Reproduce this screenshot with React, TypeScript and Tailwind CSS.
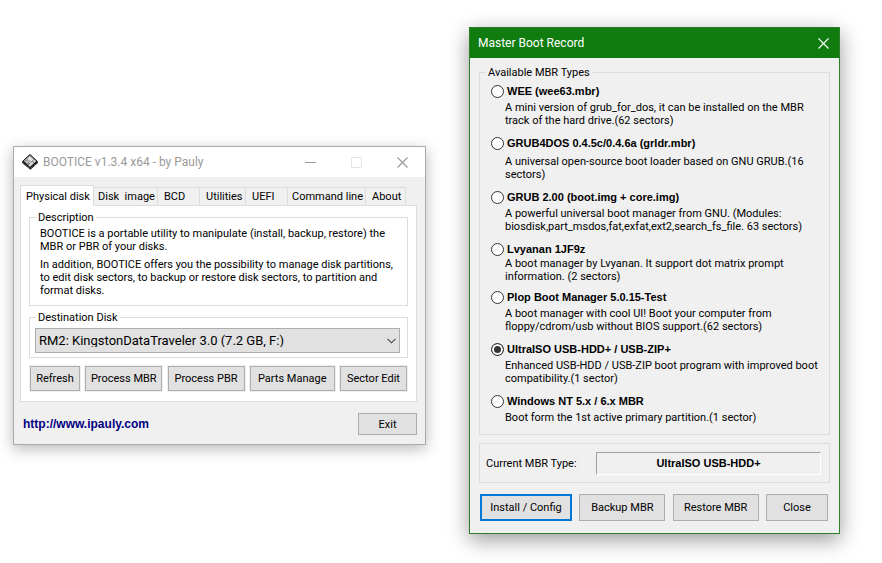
import type { ReactNode } from "react";
import clsx from "clsx";

type BootType = {
    id: string;
    title: string;
    lines: string[];
    descClass?: string;
    gapClass?: string;
};

const tabs = [
    { label: "Physical disk", width: "w-[74px]" },
    { label: "Disk  image", width: "w-[64px] pl-1" },
    { label: "BCD", width: "w-[42px] pl-1.5" },
    { label: "Utilities", width: "w-[46px] pl-1.5" },
    { label: "UEFI", width: "w-[42px] pl-1.5" },
    { label: "Command line", width: "w-[78px] pl-1" },
    { label: "About", width: "w-[40px] pl-1.5" },
];

const diskActions = [
    { label: "Refresh", width: "w-[50px]" },
    { label: "Process MBR", width: "w-[77px]" },
    { label: "Process PBR", width: "w-[77px]" },
    { label: "Parts Manage", width: "w-[85px]" },
    { label: "Sector Edit", width: "w-[67px]" },
];

const bootTypes: BootType[] = [
    {
        id: "wee",
        title: "WEE (wee63.mbr)",
        lines: [
            "A mini version of grub_for_dos, it can be installed on the MBR",
            "track of the hard drive.(62 sectors)",
        ],
        descClass: "mt-0.5",
        gapClass: "mb-2",
    },
    {
        id: "grub4dos",
        title: "GRUB4DOS 0.4.5c/0.4.6a (grldr.mbr)",
        lines: ["A universal open-source boot loader based on GNU GRUB.(16", "sectors)"],
        descClass: "mt-1",
        gapClass: "mb-2",
    },
    {
        id: "grub2",
        title: "GRUB 2.00 (boot.img + core.img)",
        lines: [
            "A powerful universal boot manager from GNU. (Modules:",
            "biosdisk,part_msdos,fat,exfat,ext2,search_fs_file. 63 sectors)",
        ],
        descClass: "mt-0.5",
        gapClass: "mb-2",
    },
    {
        id: "lvyanan",
        title: "Lvyanan 1JF9z",
        lines: ["A boot manager by Lvyanan. It support dot matrix prompt", "information. (2 sectors)"],
        gapClass: "mb-1.5",
    },
    {
        id: "plop",
        title: "Plop Boot Manager 5.0.15-Test",
        lines: [
            "A boot manager with cool UI! Boot your computer from",
            "floppy/cdrom/usb without BIOS support.(62 sectors)",
        ],
        descClass: "mt-0.5",
        gapClass: "mb-2",
    },
    {
        id: "ultraiso",
        title: "UltraISO USB-HDD+ / USB-ZIP+",
        lines: ["Enhanced USB-HDD / USB-ZIP boot program with improved boot", "compatibility.(1 sector)"],
        descClass: "mt-0.5",
        gapClass: "mb-2",
    },
    {
        id: "nt",
        title: "Windows NT 5.x / 6.x MBR",
        lines: ["Boot form the 1st active primary partition.(1 sector)"],
        descClass: "mt-0.5",
    },
];

const PushButton = ({ className, children }: { className?: string; children: ReactNode }) => (
    <button
        type="button"
        className={clsx(
            "flex items-center justify-center whitespace-nowrap bg-[#e1e1e1] hover:bg-[#e5f1fb]",
            className
        )}
    >
        {children}
    </button>
);

type GroupProps = {
    title: string;
    className?: string;
    bodyClass: string;
    children: ReactNode;
};

const Group = ({ title, className, bodyClass, children }: GroupProps) => (
    <fieldset className={clsx("min-w-0 border border-[#dcdcdc]", className)}>
        <legend className="ml-1.5 px-0.5 leading-[13px]">{title}</legend>
        <div className={bodyClass}>{children}</div>
    </fieldset>
);

const DiskIcon = () => (
    <svg width="16" height="16" viewBox="0 0 16 16" aria-hidden="true">
        <path d="M8 .2 15.8 7.6V9L8.4 15.8 .2 9V7.4Z" fill="#111" />
        <path d="M8 .6 14.8 7.2 8 13.4 .9 7.2Z" fill="#d8d8d8" stroke="#000" strokeWidth=".9" />
        <path d="M8 1.8 11.9 5.5 8.8 8.2 4.6 4.9Z" fill="#fff" stroke="#333" strokeWidth=".6" />
        <path d="M6.6 4.9 9 7M8 3.8 10.3 5.9" stroke="#888" strokeWidth=".6" />
        <path d="M3.8 6.2 7.6 9.8 6 11.2 2.2 7.6Z" fill="#999" stroke="#222" strokeWidth=".5" />
        <path d="M3.8 7.2 5.4 8.8" stroke="#fff" strokeWidth="1" />
        <path d="M10.6 7.6 12.2 8.8" stroke="#555" strokeWidth="1" />
        <path d="M1.4 9.2 8.2 14.8 14.8 9" fill="none" stroke="#aaa" strokeWidth=".7" strokeDasharray="1 1" />
    </svg>
);

const CloseIcon = () => (
    <svg width="11" height="11" viewBox="0 0 11 11" aria-hidden="true">
        <path d="M.5.5l10 10M10.5.5l-10 10" stroke="currentColor" strokeWidth="1.1" />
    </svg>
);

const MainWindow = () => (
    <section
        aria-label="BOOTICE"
        className="mt-[119px] border border-[#aaaaaa] bg-[#f0f0f0] pb-[9px] shadow-[0_4px_14px_rgba(0,0,0,0.28)]"
    >
        <header className="flex h-[30px] items-center bg-white pl-2 text-[12px] text-[#999999]">
            <DiskIcon />
            <h1 className="flex-1 pl-[5px]">BOOTICE v1.3.4 x64 - by Pauly</h1>
            <button type="button" aria-label="Minimize" className="flex w-[46px] justify-center">
                <svg width="11" height="11" viewBox="0 0 11 11">
                    <path d="M0 5.5h11" stroke="#999" />
                </svg>
            </button>
            <button type="button" aria-label="Maximize" disabled className="flex w-[46px] justify-center">
                <svg width="11" height="11" viewBox="0 0 11 11">
                    <path d="M.5.5h10v10H.5z" fill="none" stroke="#e4e4e4" />
                </svg>
            </button>
            <button type="button" aria-label="Close" className="flex w-[46px] justify-center">
                <CloseIcon />
            </button>
        </header>

        <div className="px-2 pt-2 pl-1.5">
            <div role="tablist" className="flex items-end">
                {tabs.map((tab, i) => (
                    <button
                        key={tab.label}
                        type="button"
                        role="tab"
                        aria-selected={i === 0}
                        className={clsx(
                            "whitespace-pre border-t border-r border-[#dcdcdc] text-left",
                            tab.width,
                            i === 0 ? "relative -mb-px h-[21px] border-l bg-white pl-[5px]" : "h-[18px]"
                        )}
                    >
                        {tab.label}
                    </button>
                ))}
            </div>

            <div role="tabpanel" className="border border-[#dcdcdc] bg-white px-2 pt-[5px] pb-2.5">
                <Group title="Description" bodyClass="px-2.5 pb-2">
                    <p className="pt-[3px]">
                        BOOTICE is a portable utility to manipulate (install, backup, restore) the
                        <br />
                        MBR or PBR of your disks.
                    </p>
                    <p className="pt-[5px]">
                        In addition, BOOTICE offers you the possibility to manage disk partitions,
                        <br />
                        to edit disk sectors, to backup or restore disk sectors, to partition and
                        <br />
                        format disks.
                    </p>
                </Group>

                <Group title="Destination Disk" className="mt-[5px]" bodyClass="px-[5px] pb-1">
                    <div className="relative mt-1 mr-0.5">
                        <select
                            aria-label="Destination Disk"
                            className="block h-[25px] w-full appearance-none border border-[#adadad] bg-[#e1e1e1] px-[3px] text-[13px]"
                        >
                            <option>RM2: KingstonDataTraveler 3.0 (7.2 GB, F:)</option>
                        </select>
                        <svg
                            className="pointer-events-none absolute top-2.5 right-1"
                            width="9"
                            height="6"
                            viewBox="0 0 9 6"
                        >
                            <path d="M.5.8l4 4 4-4" fill="none" stroke="#444" strokeWidth="1.1" />
                        </svg>
                    </div>
                </Group>

                <div className="mt-2 flex justify-between pr-px pl-px">
                    {diskActions.map((action) => (
                        <PushButton
                            key={action.label}
                            className={clsx(
                                "h-[25px] border border-[#adadad] shadow-[0_0_0_1px_#f0f0f0]",
                                action.width
                            )}
                        >
                            {action.label}
                        </PushButton>
                    ))}
                </div>
            </div>

            <footer className="flex items-center justify-between pt-[11px] pl-[3px]">
                <a
                    href="http://www.ipauly.com"
                    className="font-['Liberation_Sans',sans-serif] text-[12px] font-bold text-[#000080]"
                >
                    http://www.ipauly.com
                </a>
                <PushButton className="h-[22px] w-[59px] border border-[#adadad]">Exit</PushButton>
            </footer>
        </div>
    </section>
);

const BootOption = ({ item }: { item: BootType }) => (
    <div className={item.gapClass}>
        <label className="flex h-4 items-center gap-[3px] font-['Liberation_Sans',sans-serif] font-bold">
            <input
                type="radio"
                name="mbr-type"
                defaultChecked={item.id === "ultraiso"}
                aria-describedby={item.id}
                className="size-[13px] shrink-0 appearance-none rounded-full border border-[#333333] bg-white checked:bg-[#333333] checked:shadow-[inset_0_0_0_2px_#ffffff]"
            />
            {item.title}
        </label>
        <p id={item.id} className={clsx("pl-3.5 whitespace-nowrap", item.descClass)}>
            {item.lines.map((line) => (
                <span key={line} className="block">
                    {line}
                </span>
            ))}
        </p>
    </div>
);

const MbrDialog = () => (
    <section
        aria-label="Master Boot Record"
        className="border border-[#2a7f2a] bg-[#f0f0f0] pb-3 shadow-[0_6px_20px_rgba(0,0,0,0.4)]"
    >
        <header className="flex h-[30px] items-center justify-between bg-[#107c10] pr-2.5 pl-2 text-[12px] text-white">
            <h2>Master Boot Record</h2>
            <button type="button" aria-label="Close dialog">
                <CloseIcon />
            </button>
        </header>

        <div className="px-[9px] pt-2">
            <Group title="Available MBR Types" bodyClass="pt-1 pr-2 pb-2.5 pl-[11px]">
                {bootTypes.map((item) => (
                    <BootOption key={item.id} item={item} />
                ))}
            </Group>

            <div className="mt-2 flex h-10 items-center border border-[#dcdcdc] pr-2 pl-1.5">
                <label htmlFor="current-type" className="w-[110px]">
                    Current MBR Type:
                </label>
                <input
                    id="current-type"
                    readOnly
                    value="UltraISO USB-HDD+"
                    className="h-[23px] min-w-0 flex-1 border border-t-[#a0a0a0] border-r-white border-b-white border-l-[#a0a0a0] text-center font-['Liberation_Sans',sans-serif] font-bold"
                />
            </div>

            <div className="mt-[11px] flex justify-between pr-0.5 pl-px">
                <PushButton className="h-[27px] w-[92px] border-2 border-[#0078d7]">Install / Config</PushButton>
                <PushButton className="h-[27px] w-[86px] border border-[#adadad]">Backup MBR</PushButton>
                <PushButton className="h-[27px] w-[86px] border border-[#adadad]">Restore MBR</PushButton>
                <PushButton className="h-[27px] w-[62px] border border-[#adadad]">Close</PushButton>
            </div>
        </div>
    </section>
);

const App = () => {
    return (
        <main className="grid min-h-screen grid-cols-[413fr_371fr] items-start gap-[43px] bg-white pt-[27px] pr-[42px] pb-7 pl-[13px] font-['Roboto',sans-serif] text-[11px] leading-[13px] text-black">
            <MainWindow />
            <MbrDialog />
        </main>
    );
};

export default App;
